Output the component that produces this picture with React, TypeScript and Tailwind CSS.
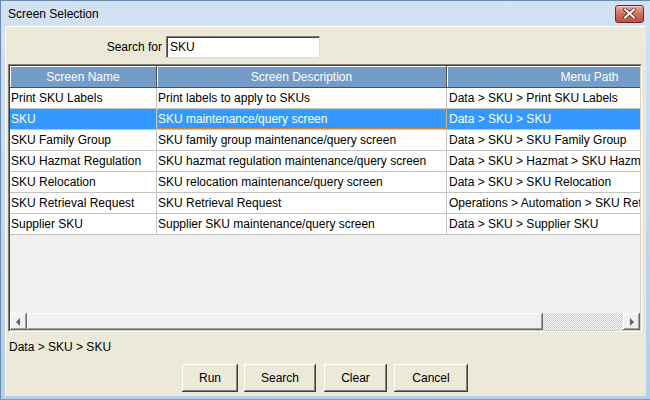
import React from "react";

type Row = { name: string; desc: string; path: string };

const rows: Row[] = [
  { name: "Print SKU Labels", desc: "Print labels to apply to SKUs", path: "Data > SKU > Print SKU Labels" },
  { name: "SKU", desc: "SKU maintenance/query screen", path: "Data > SKU > SKU" },
  { name: "SKU Family Group", desc: "SKU family group maintenance/query screen", path: "Data > SKU > SKU Family Group" },
  { name: "SKU Hazmat Regulation", desc: "SKU hazmat regulation maintenance/query screen", path: "Data > SKU > Hazmat > SKU Hazmat Regulation" },
  { name: "SKU Relocation", desc: "SKU relocation maintenance/query screen", path: "Data > SKU > SKU Relocation" },
  { name: "SKU Retrieval Request", desc: "SKU Retrieval Request", path: "Operations > Automation > SKU Retrieval Request" },
  { name: "Supplier SKU", desc: "Supplier SKU maintenance/query screen", path: "Data > SKU > Supplier SKU" },
];

const selected = 1;

function CloseButton() {
  return (
    <div className="w-[29px] h-[18px] rounded-[3px] border border-[#6b2b22] bg-gradient-to-b from-[#e8a89e] via-[#d16f5f] to-[#c0503f] flex items-center justify-center shadow-[inset_0_1px_0_#f5cfc8]">
      <svg width="13" height="11" viewBox="0 0 13 11">
        <path d="M2 1.5 L11 9.5 M11 1.5 L2 9.5" stroke="#5a2018" strokeWidth="3.6" strokeLinecap="square" />
        <path d="M2 1.5 L11 9.5 M11 1.5 L2 9.5" stroke="#ffffff" strokeWidth="2" strokeLinecap="square" />
      </svg>
    </div>
  );
}

function ScrollArrow({ dir }: { dir: "left" | "right" }) {
  return (
    <div className="w-[17px] h-[17px] bg-[#f0f0f0] shadow-[inset_-1px_-1px_0_#696969,inset_1px_1px_0_#ffffff,inset_-2px_-2px_0_#a0a0a0] flex items-center justify-center shrink-0">
      <svg width="5" height="8" viewBox="0 0 5 8">
        {dir === "left" ? <path d="M4 0 L0 4 L4 8 Z" fill="#606060" /> : <path d="M1 0 L5 4 L1 8 Z" fill="#606060" />}
      </svg>
    </div>
  );
}

function Button({ label, w }: { label: string; w: string }) {
  return (
    <button
      className={`${w} h-[28px] bg-[#ece9d8] text-[12px] text-black shadow-[inset_-1px_-1px_0_#404040,inset_1px_1px_0_#ffffff,inset_-2px_-2px_0_#808080] flex items-center justify-center`}
    >
      {label}
    </button>
  );
}

export default function App() {
  return (
    <div
      className="w-[650px] h-[400px] flex flex-col bg-gradient-to-b from-[#d3e2f3] to-[#b5cde8] border-l border-t border-[#6a8ab0] overflow-hidden"
      style={{ fontFamily: '"Liberation Sans", Arial, sans-serif' }}
    >
      {/* title bar */}
      <div className="h-[25px] flex items-center justify-between pl-[7px] pr-[6px] shrink-0">
        <span className="text-[12px] text-black">Screen Selection</span>
        <CloseButton />
      </div>

      <div className="flex-1 ml-[4px] mr-[4px] mb-[3px] bg-[#ece9d8] border-t border-l border-white flex flex-col px-[2px]">
        {/* search row */}
        <div className="flex items-center mt-[9px] h-[22px]">
          <span className="w-[158px] text-right text-[12px] text-black pr-[4px]">Search for</span>
          <div className="w-[154px] h-[22px] bg-white border border-t-[#7a7a7a] border-l-[#7a7a7a] border-b-[#dcdcdc] border-r-[#dcdcdc] shadow-[inset_1px_1px_0_#404040] flex items-center pl-[3px] text-[12px] text-black">
            SKU
          </div>
        </div>

        {/* grid */}
        <div className="mt-[6px] h-[268px] w-[634px] border border-t-[#808080] border-l-[#808080] border-b-white border-r-white">
          <div className="h-full w-full border border-t-[#404040] border-l-[#404040] border-b-[#d4d0c8] border-r-[#d4d0c8] bg-[#f0f0f0] flex flex-col">
            <div className="flex-1 overflow-hidden">
              <div className="w-[723px]">
                <div className="flex h-[22px] bg-[#739cc9] text-white text-[12px]">
                  <div className="w-[147px] shrink-0 flex items-center justify-center shadow-[inset_1px_1px_0_#ffffff] border-r border-b border-[#505050]">Screen Name</div>
                  <div className="w-[290px] shrink-0 flex items-center justify-center shadow-[inset_1px_1px_0_#ffffff] border-r border-b border-[#505050]">Screen Description</div>
                  <div className="w-[286px] shrink-0 flex items-center justify-center shadow-[inset_1px_1px_0_#ffffff] border-r border-b border-[#505050]">Menu Path</div>
                </div>
                {rows.map((r, i) => {
                  const sel = i === selected;
                  return (
                    <div
                      key={r.name}
                      className={`flex h-[21px] text-[12px] border-b border-[#c4c4c4] ${sel ? "bg-[#3399ff] text-white" : "bg-white text-black"}`}
                    >
                      <div className="w-[147px] shrink-0 border-r border-[#c4c4c4] pl-[1px] flex items-center whitespace-nowrap overflow-hidden">{r.name}</div>
                      <div className={`w-[290px] shrink-0 border-r border-[#c4c4c4] pl-[1px] flex items-center whitespace-nowrap overflow-hidden ${sel ? "outline-1 outline-dotted outline-[#d09a5a] -outline-offset-1" : ""}`}>{r.desc}</div>
                      <div className="w-[286px] shrink-0 border-r border-[#c4c4c4] pl-[2px] flex items-center whitespace-nowrap overflow-hidden">{r.path}</div>
                    </div>
                  );
                })}
              </div>
            </div>
            {/* horizontal scrollbar */}
            <div className="h-[17px] flex shrink-0">
              <ScrollArrow dir="left" />
              <div className="w-[516px] h-[17px] bg-[#f0f0f0] shadow-[inset_-1px_-1px_0_#696969,inset_1px_1px_0_#ffffff,inset_-2px_-2px_0_#a0a0a0]" />
              <div className="flex-1 h-[17px] bg-[repeating-conic-gradient(#c8c8c8_0%_25%,#ffffff_0%_50%)] bg-size-[2px_2px]" />
              <ScrollArrow dir="right" />
            </div>
          </div>
        </div>

        {/* status */}
        <div className="mt-[7px] text-[12px] text-black pl-[1px] h-[16px] leading-[16px]">Data &gt; SKU &gt; SKU</div>

        {/* buttons */}
        <div className="flex justify-center mt-[9px] pr-[2px]">
          <Button label="Run" w="w-[56px]" />
          <div className="w-[6px]" />
          <Button label="Search" w="w-[72px]" />
          <div className="w-[8px]" />
          <Button label="Clear" w="w-[63px]" />
          <div className="w-[7px]" />
          <Button label="Cancel" w="w-[74px]" />
        </div>
      </div>
      <div className="h-[1px] bg-[#5aa6d8] shrink-0" />
    </div>
  );
}
